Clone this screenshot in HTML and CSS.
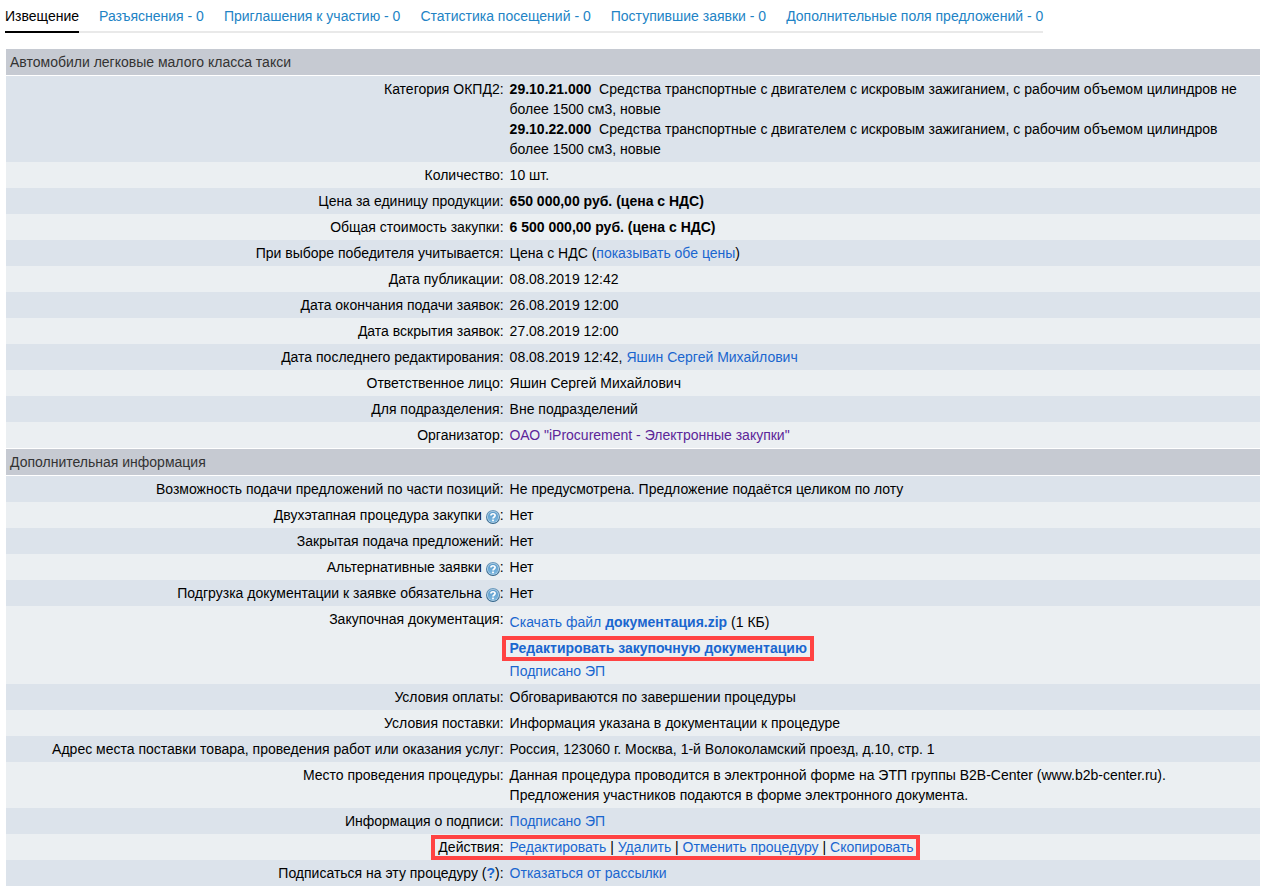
FILE: index.html
```html
<!DOCTYPE html>
<html lang="ru">
<head>
<meta charset="utf-8">
<title>Извещение</title>
<link rel="stylesheet" href="styles.css">
</head>
<body>
<svg class="defs" aria-hidden="true">
  <defs>
    <linearGradient id="ball" x1="0" y1="0" x2="0" y2="1">
      <stop offset="0" stop-color="#5a9aca"/>
      <stop offset="1" stop-color="#7db8e0"/>
    </linearGradient>
    <linearGradient id="rim" x1="0" y1="0" x2="0" y2="1">
      <stop offset="0" stop-color="#6f9dc0"/>
      <stop offset="1" stop-color="#2f6288"/>
    </linearGradient>
    <symbol id="help" viewBox="0 0 14 14">
      <circle cx="7" cy="7" r="7" fill="url(#rim)"/>
      <circle cx="7" cy="7" r="6" fill="#b4d2e8"/>
      <circle cx="7" cy="7" r="5.2" fill="url(#ball)"/>
      <path d="M4.9 5.4C4.9 3.2 9.1 3.1 9.1 5.5C9.1 7 7 6.9 7 8.6" fill="none" stroke="#fff" stroke-width="1.7"/>
      <rect x="6.1" y="9.6" width="1.8" height="1.6" fill="#fff"/>
    </symbol>
  </defs>
</svg>
<nav class="tabs">
  <a class="tab tab-active" href="#" aria-current="page">Извещение</a>
  <a class="tab" href="#">Разъяснения - 0</a>
  <a class="tab" href="#">Приглашения к участию - 0</a>
  <a class="tab" href="#">Статистика посещений - 0</a>
  <a class="tab" href="#">Поступившие заявки - 0</a>
  <a class="tab" href="#">Дополнительные поля предложений - 0</a>
</nav>
<table class="info">
  <colgroup><col class="col-label"><col></colgroup>
  <thead><tr><th class="section" colspan="2">Автомобили легковые малого класса такси</th></tr></thead>
  <tbody>
    <tr><th scope="row">Категория ОКПД2:</th><td><b>29.10.21.000</b>&nbsp; Средства транспортные с двигателем с искровым зажиганием, с рабочим объемом цилиндров не более 1500 см3, новые<br><b>29.10.22.000</b>&nbsp; Средства транспортные с двигателем с искровым зажиганием, с рабочим объемом цилиндров более 1500 см3, новые</td></tr>
    <tr><th scope="row">Количество:</th><td>10 шт.</td></tr>
    <tr><th scope="row">Цена за единицу продукции:</th><td><b>650 000,00 руб. (цена с НДС)</b></td></tr>
    <tr><th scope="row">Общая стоимость закупки:</th><td><b>6 500 000,00 руб. (цена с НДС)</b></td></tr>
    <tr><th scope="row">При выборе победителя учитывается:</th><td>Цена с НДС (<a href="#">показывать обе цены</a>)</td></tr>
    <tr><th scope="row">Дата публикации:</th><td>08.08.2019 12:42</td></tr>
    <tr><th scope="row">Дата окончания подачи заявок:</th><td>26.08.2019 12:00</td></tr>
    <tr><th scope="row">Дата вскрытия заявок:</th><td>27.08.2019 12:00</td></tr>
    <tr><th scope="row">Дата последнего редактирования:</th><td>08.08.2019 12:42, <a href="#">Яшин Сергей Михайлович</a></td></tr>
    <tr><th scope="row">Ответственное лицо:</th><td>Яшин Сергей Михайлович</td></tr>
    <tr><th scope="row">Для подразделения:</th><td>Вне подразделений</td></tr>
    <tr><th scope="row">Организатор:</th><td><a class="seen" href="#">ОАО "iProcurement - Электронные закупки"</a></td></tr>
  </tbody>
  <tbody><tr><th class="section" colspan="2">Дополнительная информация</th></tr></tbody>
  <tbody>
    <tr><th scope="row">Возможность подачи предложений по части позиций:</th><td>Не предусмотрена. Предложение подаётся целиком по лоту</td></tr>
    <tr><th scope="row">Двухэтапная процедура закупки <svg class="help"><use href="#help"/></svg>:</th><td>Нет</td></tr>
    <tr><th scope="row">Закрытая подача предложений:</th><td>Нет</td></tr>
    <tr><th scope="row">Альтернативные заявки <svg class="help"><use href="#help"/></svg>:</th><td>Нет</td></tr>
    <tr><th scope="row">Подгрузка документации к заявке обязательна <svg class="help"><use href="#help"/></svg>:</th><td>Нет</td></tr>
    <tr><th scope="row">Закупочная документация:</th><td>
      <div class="file-line"><a href="#">Скачать файл <b>документация.zip</b></a> (1 КБ)</div>
      <div class="file-line"><span class="mark"><a href="#"><b>Редактировать закупочную документацию</b></a></span></div>
      <div><a href="#">Подписано ЭП</a></div>
    </td></tr>
    <tr><th scope="row">Условия оплаты:</th><td>Обговариваются по завершении процедуры</td></tr>
    <tr><th scope="row">Условия поставки:</th><td>Информация указана в документации к процедуре</td></tr>
    <tr><th scope="row">Адрес места поставки товара, проведения работ или оказания услуг:</th><td>Россия, 123060 г. Москва, 1-й Волоколамский проезд, д.10, стр. 1</td></tr>
    <tr><th scope="row">Место проведения процедуры:</th><td>Данная процедура проводится в электронной форме на ЭТП группы B2B-Center (www.b2b-center.ru).<br>Предложения участников подаются в форме электронного документа.</td></tr>
    <tr><th scope="row">Информация о подписи:</th><td><a href="#">Подписано ЭП</a></td></tr>
    <tr><th scope="row">Действия:</th><td><span class="mark mark-row"><a href="#">Редактировать</a> | <a href="#">Удалить</a> | <a href="#">Отменить процедуру</a> | <a href="#">Скопировать</a></span></td></tr>
    <tr><th scope="row">Подписаться на эту процедуру (<a href="#"><b>?</b></a>):</th><td><a href="#">Отказаться от рассылки</a></td></tr>
  </tbody>
</table>
</body>
</html>
```

FILE: styles.css
```css
body {
  margin: 0;
  padding: 6px 5px;
  background: #fff;
  color: #000;
  font: 14px/20px "Liberation Sans", Arial, sans-serif;
}

a {
  color: #1a66cf;
  text-decoration: none;
}

a.seen {
  color: #5c2699;
}

.defs {
  position: absolute;
  width: 0;
  height: 0;
}

.tabs {
  display: flex;
  width: fit-content;
  margin-bottom: 15px;
}

.tab {
  padding: 0 0 5px 20px;
  border-bottom: 2px solid #e9e9e9;
  color: #2283c5;
  white-space: nowrap;
}

.tab-active {
  padding-left: 0;
  border-color: #000;
  color: #000;
}

.info {
  width: calc(100% - 1px);
  margin-left: 1px;
  border-spacing: 0;
  table-layout: fixed;
}

.col-label {
  width: 40%;
}

.info th,
.info td {
  padding: 3px 4px 3px 2px;
  font-weight: normal;
  text-align: right;
  vertical-align: top;
}

.info td {
  text-align: left;
}

.info tr:nth-child(odd) {
  background: #dce3eb;
}

.info tr:nth-child(even) {
  background: #ebeff2;
}

.info .section {
  padding-left: 4px;
  border: solid #fff;
  border-width: 1px 0;
  background: #c6cad2;
  color: #333;
  text-align: left;
}

.help {
  width: 14px;
  height: 14px;
  vertical-align: -4px;
}

.file-line {
  line-height: 26px;
}

.mark {
  position: relative;
}

/* Red frame drawn over the row around the marked links */
.mark::after {
  content: "";
  position: absolute;
  inset: -4px -7px -5px -8px;
  border: 4px solid #ff4343;
  pointer-events: none;
}

.mark-row::after {
  right: -6px;
  left: -79px;
}
```
